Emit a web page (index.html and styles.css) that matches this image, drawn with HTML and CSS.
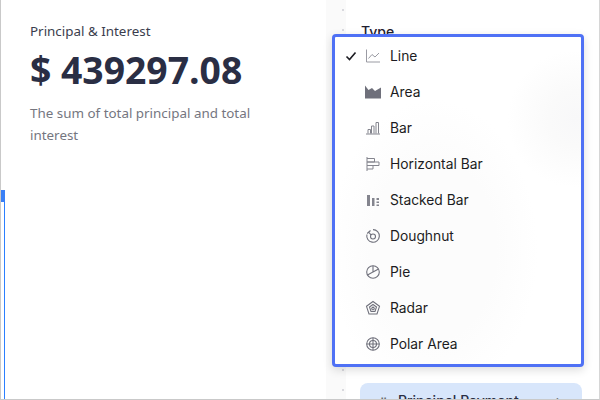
FILE: index.html
```html
<!DOCTYPE html>
<html lang="en">
<head>
<meta charset="utf-8">
<title>Chart type</title>
<link rel="stylesheet" href="styles.css">
</head>
<body>
<div class="frame">
  <main class="summary">
    <div class="label">Principal &amp; Interest</div>
    <div class="amount">$ 439297.08</div>
    <p class="desc">The sum of total principal and total interest</p>
    <div class="resize-mark"></div>
    <div class="resize-line"></div>
  </main>
  <div class="gutter"></div>
  <aside class="panel">
    <div class="type-label">Type</div>
    <div class="field">
      <span class="grip">⠿</span><span class="field-name">Principal Payment</span><span class="plus">+</span>
    </div>
  </aside>
  <ul class="menu">
    <li class="item"><span class="check"><svg width="12" height="12" viewBox="0 0 12 12"><path d="M1.500 6.500 4.500 9.500 10.500 2.500" fill="none" stroke="#1c1c22" stroke-width="1.600"/></svg></span>
      <svg class="icon" viewBox="0 0 14 14"><path d="M.5 .5v12.500H14M2.500 9.500 6 5.500l3 2.500 4-4" fill="none" stroke="#9a9ba3"/></svg><span>Line</span></li>
    <li class="item"><span class="check"></span>
      <svg class="icon" viewBox="0 0 14 14"><path d="M-1 .5 2.500 5 6 3 9 6 15 2.500V13.500H-1z" fill="#6f707b"/></svg><span>Area</span></li>
    <li class="item"><span class="check"></span>
      <svg class="icon" viewBox="0 0 14 14"><path d="M0 13h14M2 12.500V8.500h2.500v4M5.500 12.500V5H8v7.500M10 12.500V1.500h2.500v11" fill="none" stroke="#84858e"/></svg><span>Bar</span></li>
    <li class="item"><span class="check"></span>
      <svg class="icon" viewBox="0 0 14 14"><path d="M1 0v14M1 1.500h7.500v3.500H1M1 5h12v3.500H1M1 8.500h6V12H1" fill="none" stroke="#84858e"/></svg><span>Horizontal Bar</span></li>
    <li class="item"><span class="check"></span>
      <svg class="icon" viewBox="0 0 14 14"><path d="M1 2h3v11H1zM6 5h2.500v8H6zM10.500 5H13v2h-2.500zM10.500 8.500H13v1.500h-2.500zM10.500 11.500H13V13h-2.500z" fill="#84858e"/></svg><span>Stacked Bar</span></li>
    <li class="item"><span class="check"></span>
      <svg class="icon" viewBox="0 0 14 14"><g fill="none" stroke="#6f707b" stroke-width="1.100"><path d="M7 .6a6.300 6.300 0 1 1-6.100 4.900"/><circle cx="7" cy="7.500" r="2.500"/><path d="M1.200 4.500 4.500 1.500M5 5.800 2.500 3"/></g></svg><span>Doughnut</span></li>
    <li class="item"><span class="check"></span>
      <svg class="icon" viewBox="0 0 14 14"><g fill="none" stroke="#6f707b" stroke-width="1.100"><circle cx="7" cy="7" r="6.300"/><path d="M1.500 10 7 7V.7M7 7l5.500-3"/></g></svg><span>Pie</span></li>
    <li class="item"><span class="check"></span>
      <svg class="icon" viewBox="0 0 14 14"><g fill="none" stroke="#6f707b" stroke-width="1.100"><path d="M7 .5 13.500 5.300 11 13H3L.5 5.300z"/><path d="M7 3.500 10.500 6 9 10.500H5L3.500 6z"/><path d="M7 6 8.300 7.200 7.800 8.800H6.200L5.700 7.200z"/></g></svg><span>Radar</span></li>
    <li class="item"><span class="check"></span>
      <svg class="icon" viewBox="0 0 14 14"><g fill="none" stroke="#6f707b" stroke-width="1.100"><circle cx="7" cy="7" r="6.300"/><circle cx="7" cy="7" r="3.500"/><path d="M7 .7v12.600M.7 7h12.600"/></g></svg><span>Polar Area</span></li>
  </ul>
</div>
</body>
</html>
```

FILE: styles.css
```css
* { box-sizing: border-box; }
html, body { margin: 0; height: 100%; }
body { background: #fff; overflow: hidden; }

.frame {
  position: relative;
  width: 600px;
  height: 400px;
  display: flex;
  overflow: hidden;
  border-left: 1px solid #c9c9c9;
  border-right: 1px solid #d6d6d6;
  border-bottom: 1px solid #c9c9c9;
  font-family: "Inter", sans-serif;
}

.summary {
  position: relative;
  width: 325px;
  flex: none;
  padding: 21px 50px 0 29px;
  font-family: "Noto Sans", sans-serif;
}
.label { font-size: 13.400px; line-height: 20px; color: #3a3d4d; }
.amount {
  margin-top: 6px;
  font-family: "Open Sans", sans-serif;
  font-size: 37.300px;
  line-height: 46px;
  font-weight: 700;
  color: #2a2e44;
}
.desc {
  margin: 9px 0 0;
  font-size: 13.400px;
  line-height: 22px;
  color: #75767f;
}

.resize-mark {
  position: absolute;
  left: 0;
  top: 190px;
  width: 4px;
  height: 12px;
  background: #3a80f6;
}
.resize-line {
  position: absolute;
  left: 3px;
  top: 202px;
  bottom: 0;
  width: 1px;
  background: #2b7fff;
}

.gutter {
  width: 20px;
  flex: none;
  background: radial-gradient(#d9d9de 1px, transparent 1px) 7px 0 / 20px 20px #fafafa;
}

.panel { flex: 1; position: relative; padding: 22px 17px 0 15px; }
.type-label { font-size: 14px; font-weight: 500; line-height: 20px; color: #1f2030; }
.field {
  position: absolute;
  left: 14px;
  right: 17px;
  top: 383px;
  height: 40px;
  border-radius: 8px;
  background: #d8e6fb;
  display: flex;
  gap: 11px;
  padding: 9px 20px;
  font-size: 14px;
  line-height: 18px;
  font-weight: 500;
  color: #2a2e44;
}
.grip { font-size: 10px; color: #666; }
.field-name { flex: 1; }
.plus { color: #555; }

.menu {
  position: absolute;
  left: 331px;
  top: 34px;
  width: 252px;
  height: 333px;
  margin: 0;
  padding: 1px 0 0;
  list-style: none;
  background:
    radial-gradient(circle at 98% 25%, #f8f8f9 0, #fafafa 8%, transparent 20%),
    radial-gradient(ellipse at 40% 65%, #fcfcfc 0, #fcfcfc 30%, transparent 50%),
    #fff;
  border: 3px solid #4f71f5;
  border-radius: 4px;
  box-shadow: 0 3px 10px rgba(0, 0, 0, .14);
}
.item {
  height: 36px;
  display: flex;
  align-items: center;
  font-size: 13.800px;
  color: #1c1c22;
}
.check { width: 31px; padding-left: 10px; display: flex; }
.icon { width: 14px; height: 14px; margin-right: 10px; overflow: visible; flex: none; }
```
